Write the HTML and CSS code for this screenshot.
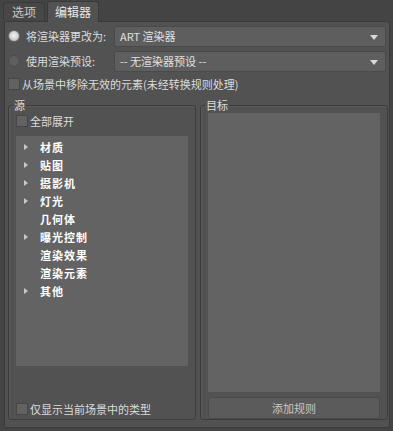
FILE: index.html
```html
<!DOCTYPE html>
<html lang="zh">
<head>
    <meta charset="UTF-8">
    <title>编辑器</title>
    <link rel="stylesheet" href="styles.css">
</head>
<body>
    <!-- 标签栏 -->
    <div class="tabs">
        <div class="tab">选项</div>
        <div class="tab active">编辑器</div>
    </div>

    <div class="panel">
        <div class="row">
            <span class="radio checked"></span>
            <span class="row-label">将渲染器更改为:</span>
            <div class="select">ART 渲染器<span class="caret"></span></div>
        </div>
        <div class="row">
            <span class="radio"></span>
            <span class="row-label">使用渲染预设:</span>
            <div class="select">-- 无渲染器预设 --<span class="caret"></span></div>
        </div>
        <label class="check top-check"><span class="box"></span>从场景中移除无效的元素(未经转换规则处理)</label>

        <div class="groups">
            <fieldset class="group">
                <legend>源</legend>
                <label class="check"><span class="box"></span>全部展开</label>
                <ul class="tree">
                    <li><span class="arrow"></span>材质</li>
                    <li><span class="arrow"></span>贴图</li>
                    <li><span class="arrow"></span>摄影机</li>
                    <li><span class="arrow"></span>灯光</li>
                    <li>几何体</li>
                    <li><span class="arrow"></span>曝光控制</li>
                    <li>渲染效果</li>
                    <li>渲染元素</li>
                    <li><span class="arrow"></span>其他</li>
                </ul>
                <label class="check bottom-check"><span class="box"></span>仅显示当前场景中的类型</label>
            </fieldset>
            <fieldset class="group">
                <legend>目标</legend>
                <div class="target-list"></div>
                <button class="add-btn">添加规则</button>
            </fieldset>
        </div>
    </div>
</body>
</html>
```

FILE: styles.css
```css
body {
    margin: 0;
    background-color: #444;
    font-family: "Noto Sans CJK SC", "Liberation Sans", sans-serif;
    font-size: 11px;
    color: #dcdcdc;
    width: 393px;
    height: 431px;
    overflow: hidden;
}
.tabs {
    display: flex;
    align-items: flex-end;
    height: 21px;
    padding-left: 3px;
    gap: 2px;
}
.tab {
    height: 17px;
    line-height: 17px;
    padding: 0 8px;
    white-space: nowrap;
    color: #c8c8c8;
    background-color: #474747;
    border: 1px solid #3a3a3a;
    border-bottom: none;
    border-radius: 3px 3px 0 0;
    font-size: 12px;
    margin-bottom: 1px;
}
.tab.active {
    height: 20px;
    line-height: 20px;
    padding: 0 7px;
    background-color: #525252;
    color: #e8e8e8;
    margin-bottom: -1px;
    position: relative;
    z-index: 1;
}
.panel {
    margin: 0 3px 0 4px;
    height: 407px;
    background-color: #525252;
    border: 1px solid #3a3a3a;
    border-radius: 0 3px 3px 3px;
    padding: 4px 2px 0 3px;
    box-sizing: border-box;
}
.row {
    display: flex;
    align-items: center;
    height: 20px;
    margin-bottom: 5px;
}
.radio {
    width: 10px;
    height: 10px;
    border-radius: 50%;
    background-color: #5e5e5e;
    border: 1px solid #4a4a4a;
    margin: 0 6px 0 0;
}
.radio.checked {
    background: radial-gradient(circle at 50% 45%, #f4f4f4 0, #d0d0d0 55%, #a8a8a8 100%);
    border-color: #6a6a6a;
}
.row-label {
    width: 88px;
    font-size: 11px;
}
.select {
    flex: 1;
    height: 19px;
    line-height: 19px;
    background-color: #5e5e5e;
    border: 1px solid #4a4a4a;
    border-radius: 2px;
    padding-left: 5px;
    position: relative;
    color: #e0e0e0;
    margin-right: 1px;
}
.caret {
    position: absolute;
    right: 7px;
    top: 8px;
    width: 0;
    height: 0;
    border-left: 4px solid transparent;
    border-right: 4px solid transparent;
    border-top: 5px solid #d8d8d8;
}
.check {
    display: flex;
    align-items: center;
    height: 14px;
}
.box {
    width: 10px;
    height: 10px;
    background-color: #626262;
    border: 1px solid #464646;
    margin-right: 2px;
}
.top-check {
    margin-top: 6px;
}
.groups {
    display: grid;
    grid-template-columns: 188px 188px;
    gap: 4px;
    margin-top: 8px;
}
.group {
    margin: 0;
    padding: 0 7px;
    height: 321px;
    box-sizing: border-box;
    border: 1px solid #3c3c3c;
    border-radius: 3px;
    box-shadow: inset 1px 1px 0 #5a5a5a;
    display: flex;
    flex-direction: column;
    min-width: 0;
}
.group legend {
    padding: 0 1px;
    margin-left: -3px;
    font-size: 11px;
    line-height: 12px;
    color: #dcdcdc;
}
.group .check {
    margin-top: 3px;
}
.tree {
    list-style: none;
    margin: 8px 0 0 0;
    padding: 2px 0 0 0;
    height: 230px;
    box-sizing: border-box;
    background-color: #636363;
}
.tree li {
    height: 18px;
    line-height: 18px;
    padding-left: 24px;
    position: relative;
    color: #fff;
    font-weight: bold;
    letter-spacing: 1px;
}
.arrow {
    position: absolute;
    left: 8px;
    top: 6px;
    width: 0;
    height: 0;
    border-top: 3px solid transparent;
    border-bottom: 3px solid transparent;
    border-left: 4px solid #c8c8c8;
}
.group .bottom-check {
    margin-top: 36px;
}
.target-list {
    height: 279px;
    margin-top: 2px;
    background-color: #636363;
}
.add-btn {
    margin-top: 5px;
    height: 22px;
    background-color: #5b5b5b;
    border: 1px solid #4a4a4a;
    border-radius: 3px;
    color: #c8c8c8;
    font-family: inherit;
    font-size: 11px;
    padding: 0;
}
```
